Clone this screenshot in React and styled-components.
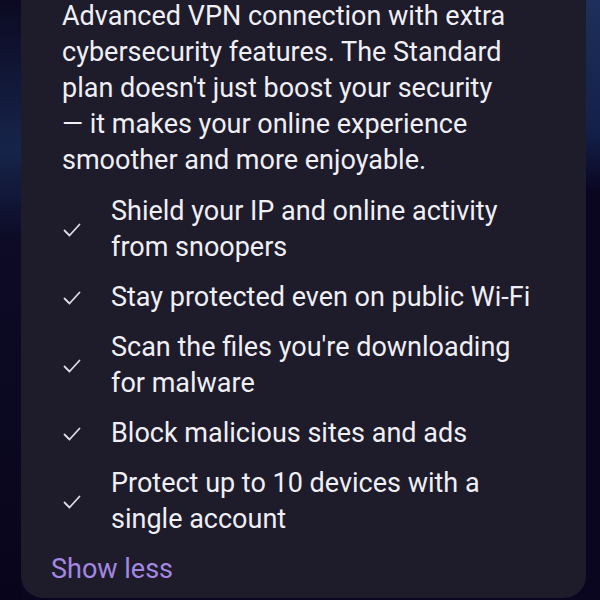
import React from "react";
import styled, { createGlobalStyle } from "styled-components";

const Global = createGlobalStyle`
  html, body { margin: 0; padding: 0; }
  body {
    background: #0a0620;
    width: 600px;
    height: 600px;
    overflow: hidden;
    font-family: Roboto, "Noto Sans", Arial, sans-serif;
  }
`;

const Page = styled.div`
  position: relative;
  width: 600px;
  height: 600px;
  overflow: hidden;
  background:
    linear-gradient(180deg, #1d2f5a 0%, #13204a 22%, #0a0620 32%, #0a0620 100%) right top / 14px 600px no-repeat,
    linear-gradient(180deg, #0c0a22 0%, #16244a 25%, #0d0b26 40%, #08051b 100%) left top / 21px 600px no-repeat,
    #0a0620;
  padding: 0 14px 2px 21px;
  box-sizing: border-box;
  display: flex;
  align-items: flex-end;
`;

const Card = styled.section`
  flex: 1;
  height: 640px;
  background: #1e1b2b;
  border-radius: 0 0 22px 22px;
  padding: 0 20px 11px 41px;
  box-sizing: border-box;
  display: flex;
  flex-direction: column;
  justify-content: flex-end;
  color: #f0eff4;
`;

const Intro = styled.p`
  margin: 0;
  font-size: 27px;
  line-height: 36px;
  white-space: nowrap;
`;

const List = styled.ul`
  list-style: none;
  margin: 15px 0 0;
  padding: 0;
  display: flex;
  flex-direction: column;
  gap: 14px;
`;

const Item = styled.li`
  display: grid;
  grid-template-columns: 49px 1fr;
  align-items: center;
  font-size: 27px;
  line-height: 36px;
  white-space: nowrap;
`;

const Check = styled.svg`
  width: 18px;
  height: 14px;
  margin-left: 1px;
  margin-top: 2px;
`;

const Toggle = styled.button`
  all: unset;
  margin-top: 14px;
  align-self: flex-start;
  font-family: Roboto, "Noto Sans", Arial, sans-serif;
  font-size: 27px;
  line-height: 36px;
  color: #a488e0;
  margin-left: -11px;
  cursor: pointer;
`;

const items = [
  ["Shield your IP and online activity", "from snoopers"],
  ["Stay protected even on public Wi-Fi"],
  ["Scan the files you're downloading", "for malware"],
  ["Block malicious sites and ads"],
  ["Protect up to 10 devices with a", "single account"],
];

const CheckIcon = () => (
  <Check viewBox="0 0 18 14" fill="none">
    <path d="M1.5 7.5 L6.5 12.5 L16.5 1.5" stroke="#dcdbe3" strokeWidth="1.8" strokeLinecap="round" strokeLinejoin="round" />
  </Check>
);

export default function App() {
  return (
    <>
      <Global />
      <Page>
        <Card>
          <Intro>
            Advanced VPN connection with extra
            <br />
            cybersecurity features. The Standard
            <br />
            plan doesn't just boost your security
            <br />
            — it makes your online experience
            <br />
            smoother and more enjoyable.
          </Intro>
          <List>
            {items.map((lines, i) => (
              <Item key={i}>
                <CheckIcon />
                <span>
                  {lines.map((l, j) => (
                    <React.Fragment key={j}>
                      {j > 0 && <br />}
                      {l}
                    </React.Fragment>
                  ))}
                </span>
              </Item>
            ))}
          </List>
          <Toggle>Show less</Toggle>
        </Card>
      </Page>
    </>
  );
}
